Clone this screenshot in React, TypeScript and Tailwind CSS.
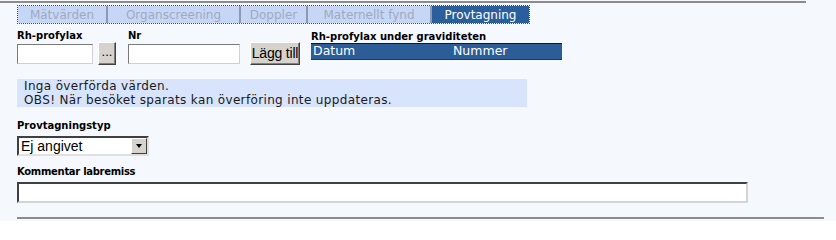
import React from 'react'

const tabs = [
  { label: 'Mätvärden', w: 'w-[88px]' },
  { label: 'Organscreening', w: 'w-[133px]' },
  { label: 'Doppler', w: 'w-[67px]' },
  { label: 'Maternellt fynd', w: 'w-[124px]' },
]

function Field({ className }: { className: string }) {
  return (
    <div
      className={`h-[20px] bg-white border border-t-[#7a7a7a] border-l-[#7a7a7a] border-r-[#d0d0d0] border-b-[#d0d0d0] ${className}`}
    />
  )
}

function Btn({ children, className }: { children: React.ReactNode; className: string }) {
  return (
    <div
      className={`h-[23px] flex items-center justify-center bg-[#d6d3ce] border border-t-white border-l-white border-r-[#404040] border-b-[#404040] font-['Liberation_Sans',sans-serif] text-black shadow-[inset_-1px_-1px_0_#808080] ${className}`}
    >
      {children}
    </div>
  )
}

export default function App() {
  return (
    <div className="w-[836px] h-[221px] overflow-hidden bg-[#f5f8fd] font-['DejaVu_Sans',Verdana,sans-serif] text-black">
      <div className="pt-[1px]">
        <div className="h-[2px] w-[806px] bg-[#8c8c8c]" />
      </div>

      {/* tabs */}
      <div className="ml-[17px] mt-[2px] flex h-[19px] w-fit border border-dotted border-[#4a4a4a]">
        {tabs.map((t, i) => (
          <div
            key={t.label}
            className={`${t.w} flex items-center justify-center bg-[#c6d6f7] text-[12px] text-[#a0aabe] ${i > 0 ? 'border-l-2 border-l-[#8d9ab0]' : ''}`}
          >
            {t.label}
          </div>
        ))}
        <div className="w-[99px] flex items-center justify-center bg-[#2b5e9c] text-[12px] text-white border-l-2 border-l-[#8d9ab0]">
          Provtagning
        </div>
      </div>

      {/* rh-profylax row */}
      <div className="ml-[17px] mt-[6px] flex">
        <div className="flex flex-col">
          <div className="h-[12px] text-[10px] font-bold leading-[12px]">Rh-profylax</div>
          <div className="flex items-center h-[23px]">
            <Field className="w-[76px]" />
            <Btn className="ml-[5px] w-[18px] pb-[4px] text-[13px]">...</Btn>
          </div>
        </div>
        <div className="ml-[12px] flex flex-col">
          <div className="h-[12px] text-[10px] font-bold leading-[12px]">Nr</div>
          <div className="flex items-center h-[23px]">
            <Field className="w-[112px]" />
            <Btn className="ml-[10px] w-[50px] text-[14px] tracking-[-0.2px]">Lägg till</Btn>
          </div>
        </div>
        <div className="ml-[11px] flex flex-col">
          <div className="h-[13px] text-[10px] font-bold leading-[13px]">Rh-profylax under graviditeten</div>
          <div className="h-[17px] w-[251px] flex items-center bg-[#2c5d98] border-t border-t-[#0d1b2e] border-b border-b-[#1c3a60] text-[12.5px] text-white">
            <span className="ml-[2px] w-[140px]">Datum</span>
            <span>Nummer</span>
          </div>
        </div>
      </div>

      {/* info */}
      <div className="ml-[17px] mt-[14px] w-[510px] h-[28px] bg-[#d7e4fb] px-[7px] text-[12px] leading-[14px] tracking-[0.35px] text-[#1a1a1a]">
        <div>Inga överförda värden.</div>
        <div>OBS! När besöket sparats kan överföring inte uppdateras.</div>
      </div>

      {/* provtagningstyp */}
      <div className="ml-[17px] mt-[13px] h-[12px] text-[10px] font-bold leading-[12px]">Provtagningstyp</div>
      <div className="ml-[17px] mt-[4px] w-[132px] h-[20px] flex bg-white border-2 border-t-[#404040] border-l-[#404040] border-r-[#e0e0e0] border-b-[#e0e0e0]">
        <div className="flex-1 pl-[2px] font-['Liberation_Sans',sans-serif] text-[14px] leading-[16px]">Ej angivet</div>
        <div className="w-[16px] h-[16px] flex items-center justify-center bg-[#d6d3ce] border border-t-white border-l-white border-r-[#404040] border-b-[#404040]">
          <div className="w-0 h-0 border-l-[3.5px] border-r-[3.5px] border-t-[4px] border-l-transparent border-r-transparent border-t-black" />
        </div>
      </div>

      {/* kommentar */}
      <div className="ml-[17px] mt-[10px] h-[12px] text-[10px] font-bold leading-[12px] tracking-[-0.3px]">Kommentar labremiss</div>
      <div className="ml-[17px] mt-[4px] w-[731px] h-[21px] bg-white border-2 border-t-[#404040] border-l-[#404040] border-r-[#d4d4d4] border-b-[#d4d4d4]" />

      <div className="ml-[17px] mt-[14px] h-[2px] w-[807px] bg-[#8c8c8c]" />
    </div>
  )
}
